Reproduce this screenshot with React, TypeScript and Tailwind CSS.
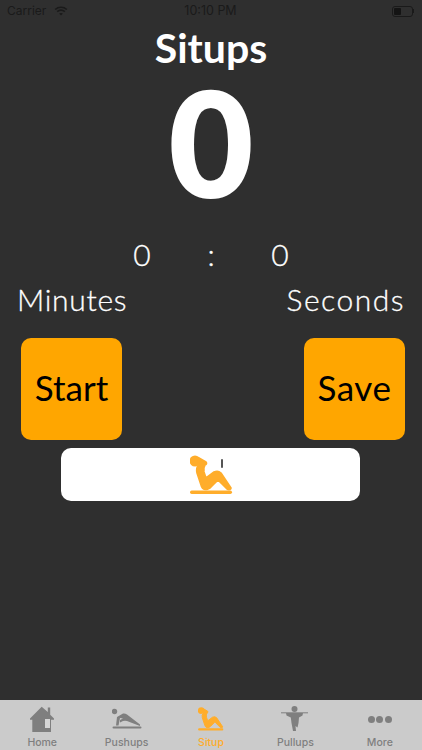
const GRAY = "#7f7f7f";
const ORANGE = "#ffad2b";

function Wifi() {
  return (
    <svg width="14" height="10" viewBox="0 0 16 12" fill="none" stroke="#1a1a1a">
      <path d="M1 4.200C5 .6 11 .6 15 4.200" strokeWidth="2" />
      <path d="M3.400 6.800c2.700-2.300 6.500-2.300 9.200 0" strokeWidth="2" />
      <path d="M8 11.400 5.700 9c1.400-1 3.200-1 4.600 0z" fill="#1a1a1a" stroke="none" />
    </svg>
  );
}

function Situp({ color, width, height }: { color: string; width: number; height: number }) {
  return (
    <svg width={width} height={height} viewBox="5 4 43 40" fill="none">
      <circle cx="10" cy="10" r="5.500" fill={color} />
      <path
        d="M14 7 21 11Q22.500 13 20 14 18 17 19 21L21 27 29 21Q33 19 36 22L46 37Q46 39 43 38.500L42 38 33 29 26 36Q24 38.500 20 38.500 17 38 16 34L12 22Q11 17 13 15z"
        fill={color}
        stroke={color}
        strokeWidth="1.600"
        strokeLinejoin="round"
      />
      <rect x="5" y="39.500" width="42" height="3.500" rx="1.700" fill={color} />
    </svg>
  );
}

function Home() {
  return (
    <svg width="24" height="26" viewBox="0 0 24 26" fill={GRAY}>
      <path d="M11.700 .8 0 12.500v1.300h2.300V26H21V13.800h3v-1.300l-3.800-3.800V1.500h-2.400v4.600z" />
      <rect x="15" y="13" width="5" height="9" fill="#d6d6d6" />
    </svg>
  );
}

function Pushup() {
  return (
    <svg width="30" height="22" viewBox="9 8 30 22" fill={GRAY}>
      <circle cx="11.500" cy="11.500" r="2.700" />
      <path d="M13 25.500 14 17 20 13.500Q22 13 24 14.500L37 24.500V26L24 21Q22 20.500 20 21L17 22.500V20L20 18.500 17 18 15.500 25.500z" />
      <rect x="9.500" y="26.500" width="29" height="2" rx="1" />
    </svg>
  );
}

function Pullup() {
  return (
    <svg width="28" height="27" viewBox="0 0 28 27" fill={GRAY}>
      <circle cx="13.500" cy="3" r="3" />
      <rect x="0" y="6.300" width="27" height="1" />
      <path d="M5 7H22L21.500 9.500 18 11.500 17.500 17 16.500 21.500 14.500 20 15 25H12L10.500 17 9.800 11.500 5.500 9.500z" />
    </svg>
  );
}

function Tab({ label, color, children }: { label: string; color: string; children: React.ReactNode }) {
  return (
    <div className="flex-1 flex flex-col items-center h-full">
      <div className="h-[36px] flex items-center justify-center pt-[2px]">{children}</div>
      <span className="text-[10.5px] leading-[13px] font-medium font-['Inter',sans-serif]" style={{ color }}>
        {label}
      </span>
    </div>
  );
}

export default function App() {
  return (
    <div className="w-[422px] h-[750px] bg-[#2f2f2f] flex flex-col overflow-hidden font-['Lato','Open_Sans',sans-serif] text-white">
      <div className="h-[22px] flex items-center justify-between pl-[7px] pr-[8px] text-[12.500px] text-[#1a1a1a] font-['Inter',sans-serif]">
        <div className="flex items-center gap-[8px] w-[100px]">
          <span className="text-[12px]">Carrier</span>
          <Wifi />
        </div>
        <span>10:10 PM</span>
        <div className="w-[100px] flex justify-end items-center">
          <div className="w-[21px] h-[11px] border border-[#1a1a1a] rounded-[3px] p-[1px]">
            <div className="w-[7px] h-full bg-[#141414] rounded-[1px]" />
          </div>
          <div className="w-[1px] h-[4px] bg-[#1a1a1a]" />
        </div>
      </div>

      <div className="text-center text-[41px] leading-[50px] font-bold mt-[1px]">Situps</div>

      <div className="text-center text-[144px] leading-[130px] font-black mt-[4px] [-webkit-text-stroke:2px_white]">0</div>

      <div className="flex justify-center items-center h-[40px] mt-[27px] text-[30px] leading-[40px] font-light [-webkit-text-stroke:0.3px_white]">
        <span className="w-[20px] text-center">0</span>
        <span className="w-[118px] text-center">:</span>
        <span className="w-[20px] text-center">0</span>
      </div>

      <div className="flex justify-between pl-[17px] pr-[17px] text-[30px] leading-[40px] mt-[5px] font-light [-webkit-text-stroke:0.3px_white]">
        <span className="tracking-[0.700px]">Minutes</span>
        <span className="tracking-[1.500px]">Seconds</span>
      </div>

      <div className="flex justify-between pl-[21px] pr-[17px] mt-[19px]">
        <div className="w-[101px] h-[102px] bg-[#ffa600] rounded-[10px] flex items-center justify-center text-black text-[35px] pb-[3px]">
          Start
        </div>
        <div className="w-[101px] h-[102px] bg-[#ffa600] rounded-[10px] flex items-center justify-center text-black text-[35px] pb-[3px] tracking-[0.500px]">
          Save
        </div>
      </div>

      <div className="relative mt-[8px] ml-[61px] w-[299px] h-[53px] bg-white rounded-[10px] flex items-center justify-center">
        <div className="ml-[1px] mt-[1px] flex">
          <Situp color={ORANGE} width={43} height={40} />
        </div>
        <div className="absolute left-[160px] top-[11px] w-[2px] h-[9px] bg-[#555555] rounded-full" />
      </div>

      <div className="mt-auto h-[50px] bg-[#cbcbcb] flex">
        <Tab label="Home" color={GRAY}><Home /></Tab>
        <Tab label="Pushups" color={GRAY}><Pushup /></Tab>
        <Tab label="Situp" color={ORANGE}><Situp color={ORANGE} width={26} height={24} /></Tab>
        <Tab label="Pullups" color={GRAY}><Pullup /></Tab>
        <Tab label="More" color={GRAY}>
          <div className="flex gap-[1.500px]">
            <div className="w-[7px] h-[7px] rounded-full bg-[#7f7f7f]" />
            <div className="w-[7px] h-[7px] rounded-full bg-[#7f7f7f]" />
            <div className="w-[7px] h-[7px] rounded-full bg-[#7f7f7f]" />
          </div>
        </Tab>
      </div>
    </div>
  );
}
